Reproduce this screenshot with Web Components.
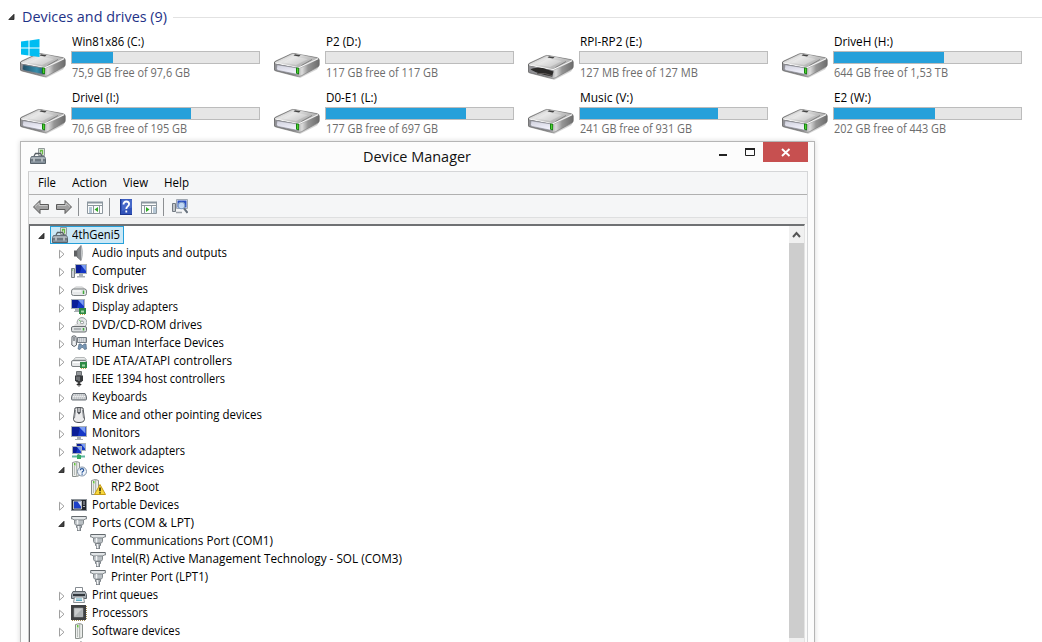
<!DOCTYPE html>
<html lang="en">
<head>
<meta charset="utf-8">
<title>Device Manager</title>
<style>
html,body{margin:0;height:642px;overflow:hidden;background:#fff;font:12px "Open Sans","Noto Sans",sans-serif;color:#000}
</style>
</head>
<body>
<desk-page></desk-page>
<script>
const define = (name, cls) => customElements.define(name, cls);

/* Text squeezed or stretched to a given width */
define('fit-text', class extends HTMLElement {
  connectedCallback() {
    if (this.shadowRoot) return;
    const r = this.attachShadow({mode:'open'});
    r.innerHTML = `<style>:host{display:block;white-space:nowrap;flex:none;width:${this.getAttribute('w')}px}span{display:inline-block;transform-origin:0 50%}</style><span><slot></slot></span>`;
    const s = r.querySelector('span');
    const w = s.getBoundingClientRect().width;
    if (w) s.style.transform = `scaleX(${+this.getAttribute('w') / w})`;
  }
});

const port = `<path d="M3.500 4.500h9v4l-1 1.500h-7l-1-1.500z" fill="#b9bfc3" stroke="#858b8f"/><path d="M.5 1.500h15v2.500h-1.500l-1 1h-10l-1-1H.5z" fill="#cfd4d7" stroke="#858b8f"/><path d="M1 1.500h14" stroke="#63696d"/><path d="M2 3h12" stroke="#f3f5f6"/><path d="M5.500 10.500h5v2h-1v3.500h-3v-3.500h-1z" fill="#a9afb3" stroke="#7b8186"/><path d="M6.500 5v4.500M7.500 11v4" stroke="#f2f4f5" stroke-width="1.500"/>`;
const tower = `<path d="M4.500 1.500l4-1 3 1v13l-3 1h-4z" fill="#eceeec" stroke="#8a908c"/><path d="M8.700 1v14" stroke="#a4aaa6"/><path d="M6.500 5v9" stroke="#b9bebb"/><rect x="6" y="2" width="1.500" height="2.500" fill="#68c53f"/>`;
const screen = (x,y,w,h) => `<rect x="${x+.5}" y="${y+.5}" width="${w-1}" height="${h-1}" fill="#1537c6" stroke="#a9b1b9"/><path d="M${x+1} ${y+1}h${w/2}l-2 ${h-2}h-${w/2-2}z" fill="#0b1f98"/><path d="M${x+w*.5} ${y+1}h${w*.4}v${h*.6}z" fill="#7b9df2"/>`;
const chip = (x,y) => `<path d="M${x} ${y}h7v6h-7z" fill="#2e8a45"/><path d="M${x+1} ${y+6.500}h5" stroke="#c4a544" stroke-dasharray="1 1"/><path d="M${x+2} ${y+3.500}h3" stroke="#a6d8a9" stroke-width="2"/>`;
const flatDrive = `<path d="M2.500 7l2-2.500h9l2 2.500z" fill="#e9ebeb" stroke="#b5b8b9"/><rect x=".5" y="7.500" width="15" height="6" rx="1.500" fill="#e6e8e9" stroke="#7c8183"/><path d="M2 9.500h9" stroke="#fff"/><path d="M12.500 9v3" stroke="#42a83b" stroke-width="1.500"/>`;
const ICONS = {
  manager: `<path d="M8.500.5h6v7h-6z" fill="#e4e7e5" stroke="#929a9a"/><path d="M10.500 4.500v-2h2v4" stroke="#67b944" fill="none" stroke-width="1.300"/><path d="M4 8l1.500-2.500h5L12 8" fill="none" stroke="#565e63" stroke-width="1.300"/><path d="M1.500 8.500h13l1 2v1.500H.500v-1.500z" fill="#a5aeb5" stroke="#66707a"/><path d="M.5 12h15v3.500H.500z" fill="#84909a" stroke="#59636b"/><path d="M4 10.500v3M12 10.500v3" stroke="#dce2e5" stroke-width="1.200"/>`,
  audio: `<path d="M3 5.500h3v6H3z" fill="#5c5f62"/><path d="M6 5l4-4.500v15L6 12z" fill="#85898c" stroke="#65696c" stroke-width=".7"/><path d="M10 .8c2 4 2 10 0 14.500z" fill="#d7dadb" stroke="#999c9e" stroke-width=".6"/>`,
  computer: `<path d="M.5 5.500h3v9h-3z" fill="#ced2d5" stroke="#7c8387"/><path d="M1 7h1" stroke="#55b94a"/>${screen(4,1,12,10)}<path d="M8 11h4v2h2v1.500H6V13h2z" fill="#a9b0b5"/>`,
  disk: `<path d="M2.500 8l2-2h7l2 2z" fill="#eff0f0" stroke="#c1c3c4"/><rect x=".5" y="8" width="15" height="6.500" rx="2" fill="#e6e8e9" stroke="#7c8183"/><path d="M2 10h8" stroke="#fff"/><path d="M12.500 9.500v3.500" stroke="#42a83b" stroke-width="1.500"/>`,
  display: `${screen(0,0,14,10)}<path d="M4 10h5v2h1v1H3v-1h1z" fill="#a9b0b5"/>${chip(8,9)}`,
  dvd: `<circle cx="11" cy="5.500" r="4.900" fill="#e4e8e8" stroke="#969c9e"/><circle cx="11" cy="5.500" r="1.500" fill="#fff" stroke="#8c9293"/><path d="M8 3l2 1.500" stroke="#71be65"/><path d="M2.500 9l2-2h7l2 2z" fill="#ddd"/><rect x=".5" y="9.500" width="15" height="5.500" rx="1.500" fill="#dcdfe0" stroke="#6b7073"/><path d="M3 12h7" stroke="#80868a"/><path d="M12.500 11v2.500" stroke="#42a83b" stroke-width="1.500"/>`,
  hid: `<path d="M1 1.500Q3 0 5 1.500l.5 8.500Q3 13 .8 10z" fill="#eceef0" stroke="#5c6268"/><path d="M3 2v4" stroke="#3b424a"/><path d="M6.500 2.500h9v5h-9z" fill="#bac0c6" stroke="#757c83"/><path d="M7 4h8M7 6h8" stroke="#f3f4f5" stroke-dasharray="1 1"/><path d="M7 14l1-5h2l1 1.500h1L13 9h2l.5 5-2 .5-1.500-2h-1.500L9 14.500z" fill="#7796b4" stroke="#566e86" stroke-width=".7"/>`,
  ide: `${flatDrive}${chip(9,9)}`,
  firewire: `<path d="M5.500.5h5v4h-5z" fill="#d9dcde" stroke="#6b7073"/><path d="M7 1v3M9 1v3" stroke="#4e5356"/><path d="M4 4.500h8v5l-2 2H6l-2-2z" fill="#383b3e"/><path d="M6 5.500v3.500M8 5.500v4.500" stroke="#a0a5a8"/><path d="M7.500 11h1v2h-1zM6 13h4v1H6zM7 15h2" fill="#222" stroke="#333" stroke-width=".7"/>`,
  keyboard: `<path d="M2 4.500h12l1.500 3v2.500q0 1-1 1h-13q-1 0-1-1V7.500z" fill="#b5b9bd" stroke="#6c7278"/><path d="M2.500 6h11M2 7.500h12M1.500 9h13" stroke="#f4f5f6" stroke-dasharray="1.500 .6"/>`,
  mouse: `<path d="M4 1Q8-.3 12 1l1.500 11.500Q13 15.500 8 15.500T2.500 12.500z" fill="#ececed" stroke="#4b4f53"/><path d="M6.300 1v4.500l1.700 2 1.700-2V1z" fill="#4a4e53"/><path d="M8 1v4" stroke="#fff" stroke-width="1.200"/><path d="M3.500 11L4.500 3M12.500 11L11.500 3" stroke="#85898d"/>`,
  monitor: `${screen(0,1,16,11)}<path d="M6 12h4v2h2v1H4v-1h2z" fill="#a9b0b5"/>`,
  network: `${screen(5,0,10,8)}${screen(1,3,10,8)}<path d="M7.500 11v3" stroke="#68a79b" stroke-width="2"/><path d="M1 13.500h13" stroke="#5fb6a0" stroke-width="2"/><path d="M6 12h4v4H6z" fill="#38ad62"/>`,
  other: `<g transform="translate(-3)">${tower}</g><circle cx="11" cy="10.500" r="4.500" fill="#edf3fa" stroke="#7f91a6"/><path d="M9.300 9.300q0-1.600 1.700-1.600t1.700 1.500q0 .8-1 1.400-.6.400-.6 1.200M11.100 12.600v1.200" stroke="#25539a" stroke-width="1.200"/>`,
  warning: `<g transform="translate(-3)">${tower}</g><path d="M10 5.500l5.500 10h-11z" fill="#f8d83c" stroke="#c79c16" stroke-linejoin="round"/><path d="M10 8.500v3.700M10 13.200v1.300" stroke="#332800" stroke-width="1.500"/>`,
  portable: `<rect x=".5" y="2.500" width="15" height="11" fill="#23272f" stroke="#8f959b"/><path d="M3 4.500h7v7H3z" fill="#1d3fc8"/><path d="M6.500 4.500h3.500v5z" fill="#dce6fb"/><path d="M2.500 4h8v8h-8z" stroke="#dfe4ea" stroke-width=".8"/><path d="M12 5h2M12 7h2M12 9.500h2" stroke="#b6bac1"/>`,
  port,
  printer: `<path d="M4.500.5h7v5h-7z" fill="#fff" stroke="#868c92"/><path d="M2 4.500h12l1.500 3v4H.500v-4z" fill="#a5acb2" stroke="#5c6369"/><path d="M2 8h12" stroke="#33383d" stroke-width="2"/><path d="M3.500 10h9l1 5.500h-11z" fill="#f4f7f8" stroke="#8b9196"/><path d="M5 12h6M5 13.500h6" stroke="#58a7bf"/>`,
  cpu: `<path d="M0 0h15v15H0z" fill="#3e4042"/><path d="M3 3h9v9H3z" fill="#c9cccd" stroke="#8b8e90" stroke-width=".6"/><path d="M3.500 11.500l8-8v8z" fill="#aeb2b4"/><path d="M1 15.500h14M15.500 1v14" stroke="#a48c50" stroke-dasharray="1 1"/>`,
  software: tower,
  back: `<path d="M.5 8L7 1.500v4h8.500v5H7v4z" fill="#a0a0a0" stroke="#5a5a5a"/><path d="M2 7.500l4-3.500v2.500h8.500" fill="none" stroke="#c9c9c9"/>`,
  forward: `<path d="M15.500 8L9 1.500v4H.500v5H9v4z" fill="#a0a0a0" stroke="#5a5a5a"/><path d="M14 7.500L10 4v2.500H1.500" fill="none" stroke="#c9c9c9"/>`,
  tree: `<path d="M.5 3.500h15v11H.500z" fill="#fbfcfc" stroke="#8d979e"/><path d="M0 3.500h16" stroke="#8b969f" stroke-width="2"/><path d="M1 6.500h14M6.500 7v8M12.500 7v8" stroke="#8d979e"/><path d="M2 9h3M2 11h3M2 13h3" stroke="#6e91ad"/><path d="M11 8v5L7.500 10.500z" fill="#30aa25"/>`,
  pane: `<path d="M.5 3.500h15v11H.500z" fill="#fbfcfc" stroke="#8d979e"/><path d="M0 3.500h16" stroke="#8b969f" stroke-width="2"/><path d="M1 6.500h14M10.500 7v8M3.500 7v8" stroke="#8d979e"/><path d="M12 9h3M12 11h3M12 13h3" stroke="#6e91ad"/><path d="M5 8v5l3.500-2.500z" fill="#30aa25"/>`,
  help: `<path d="M2 0h12v16H2z" fill="#3153b9"/><path d="M2.500 0v16M2 15.500h12" stroke="#1d3792"/><path d="M4 .500h10v8L4 12z" fill="#5577d4" opacity=".6"/><path d="M5.500 5.500q0-3 2.800-3t2.800 2.600q0 1.500-1.600 2.500-1.200.9-1.200 2.400M8.300 11.500v2" stroke="#fff" stroke-width="1.800"/>`,
  scan: `<path d="M.5 4.500h3v8h-3z" fill="#c2c6ca" stroke="#737a82"/><path d="M4.500.5h11v9h-11z" fill="#e9edf1" stroke="#a1a9b2"/><path d="M5.500 1.500h9v7h-9z" fill="#2a4fc0"/><path d="M4 13.500h6" stroke="#9ca2a8" stroke-width="1.500"/><circle cx="9.500" cy="6.500" r="3.300" fill="#cfe5fb" fill-opacity=".9" stroke="#7f9cc4" stroke-width="1.100"/><path d="M12 9.300l3.500 4.500" stroke="#65707c" stroke-width="2"/>`
};
define('sys-icon', class extends HTMLElement {
  connectedCallback() {
    if (this.shadowRoot) return;
    this.attachShadow({mode:'open'}).innerHTML = `<style>:host{display:block;width:16px;height:16px;flex:none}svg{display:block;width:100%;height:100%}</style><svg viewBox="0 0 16 16" fill="none">${ICONS[this.getAttribute('name')]}</svg>`;
  }
});

/* Triangle in front of a tree node */
define('tree-arrow', class extends HTMLElement {
  connectedCallback() {
    if (this.shadowRoot) return;
    const open = this.hasAttribute('open');
    this.attachShadow({mode:'open'}).innerHTML = `<style>:host{display:block;width:8px;height:10px;flex:none}svg{display:block}</style><svg width="8" height="10">${open ? '<path d="M6 2.300v5.200H.8z" fill="#444" stroke="#1c1c1c" stroke-width=".8"/>' : '<path d="M1.500 1.200v8L6 5.200z" fill="#fff" stroke="#a0a0a0"/>'}</svg>`;
  }
});

define('drive-icon', class extends HTMLElement {
  connectedCallback() {
    if (this.shadowRoot) return;
    const kind = this.getAttribute('kind');
    const dy = kind === 'empty' ? 2 : 0;
    const face = kind === 'empty' ? '<path d="M2.500 31.500q3-2.500 12-1.500l11 3.500-1.500 5q-13-2-21.500-7z" fill="#2c2b2a"/><path d="M9 35.500q8-1 15 2.200" stroke="#5f5a57" fill="none"/>'
      : `<path d="M3 28.700l20.500 3.300q1 0 1 1v4.200q0 1.500-2 1L4 34.500q-1.500-.5-1.500-2z" fill="${kind==='system' ? 'url(#t)' : 'url(#w)'}" stroke="#7f828a" stroke-width=".6"/>`;
    this.attachShadow({mode:'open'}).innerHTML = `<style>:host{display:block;width:48px;height:44px}svg{display:block}</style>
    <svg width="48" height="44"><defs>
    <linearGradient id="a" x2="1" y2=".7"><stop stop-color="#8a8a8a"/><stop offset=".35" stop-color="#e6e6e6"/><stop offset=".65" stop-color="#c2c2c2"/><stop offset="1" stop-color="#a0a0a0"/></linearGradient>
    <linearGradient id="b" x2="1"><stop stop-color="#5f5f5f"/><stop offset=".45" stop-color="#8a8a8a"/><stop offset=".62" stop-color="#dcdcdc"/><stop offset=".75" stop-color="#969696"/><stop offset="1" stop-color="#6c6c6c"/></linearGradient>
    <linearGradient id="w" y2="1" x2=".3"><stop stop-color="#cfd0dc"/><stop offset="1" stop-color="#f2f2fc"/></linearGradient>
    <linearGradient id="t" x2="1"><stop stop-color="#224d65"/><stop offset=".65" stop-color="#378eac"/><stop offset="1" stop-color="#23556d"/></linearGradient></defs>
    <g transform="translate(0 ${dy})"><path d="M1 35l23 6.500 21-11-2 3-17 8.500z" fill="#aaa" opacity=".5"/>
    <path d="M-.2 28q0-2 2-3l15-7q1.500-.9 4-.4l22 4q2.500.5 2.500 2.500v4.500q0 1.500-1.500 2.500L27 40q-2 1-4.500.3L2 35Q0 34.500 0 33z" fill="url(#b)" stroke="#6a6a6a" stroke-width=".6"/>
    <path d="M1 27q0-1 1.500-1.700l15-7q1.500-.7 3.500-.3l22 4q2.500.6 1 1.500L28 31.500q-1.500.8-4 .3z" fill="url(#a)"/>
    <path d="M9 26.500l11-6 14 2.500-12 6z" fill="#fff" opacity=".3"/><path d="M21 18.300l5.500 1-1.500 1.200-5.500-1z" fill="#444"/>
    <path d="M38 23.500L27.500 29.500" stroke="#777" stroke-width=".8"/>
    <path d="M1 27l24 4.700 19-9" stroke="#fff" stroke-width=".9" fill="none"/>
    <path d="M.7 27.700l24.800 4.500-.7 7.300L2 34.500Q.500 34 .5 32z" fill="#909094"/>${face}
    ${kind === 'empty' ? '' : '<path d="M22 31.500l3 .3v6.400l-3-.6z" fill="#148410"/><path d="M23.700 32.500v4.500" stroke="#5fe03a"/>'}</g>
    ${kind === 'system' ? '<path d="M1 5.600l7.500-1v7H1zM9.500 4.500L19.500 3v8.600h-10zM1 12.600h7.500v7l-7.500-1zM9.500 12.600h10V21l-10-1.300z" fill="#00bdf2"/>' : ''}</svg>`;
  }
});

define('drive-tile', class extends HTMLElement {
  connectedCallback() {
    if (this.shadowRoot) return;
    const [name, w, free, fw, fill, kind] = ['name','w','free','fw','fill','kind'].map(k => this.getAttribute(k));
    this.attachShadow({mode:'open'}).innerHTML = `<style>
    :host{display:flex;height:56px}
    .info{margin-left:4px;flex:none;width:188px}
    fit-text{line-height:11px;height:15px}
    .bar{height:11px;width:187px;margin-left:-1px;border:1px solid #bcbcbc;background:#e6e6e6}
    .bar i{display:block;height:11px;background:#26a0da;width:${fill}px}
    .free{color:#6d6d6d;line-height:15px;margin-top:1px}</style>
    <drive-icon kind="${kind}"></drive-icon>
    <div class="info"><fit-text w="${w}">${name}</fit-text><div class="bar"><i></i></div><fit-text class="free" w="${fw}">${free}</fit-text></div>`;
  }
});

define('drive-group', class extends HTMLElement {
  connectedCallback() {
    if (this.shadowRoot) return;
    const tiles = [
      ['Win81x86 (C:)',72,'75,9 GB free of 97,6 GB',118,41,'system'],
      ['P2 (D:)',35,'117 GB free of 117 GB',112,0,'disk'],
      ['RPI-RP2 (E:)',62,'127 MB free of 127 MB',118,0,'empty'],
      ['DriveH (H:)',59,'644 GB free of 1,53 TB',114,110,'disk'],
      ['DriveI (I:)',47,'70,6 GB free of 195 GB',115,119,'disk'],
      ['D0-E1 (L:)',51,'177 GB free of 697 GB',112,140,'disk'],
      ['Music (V:)',53,'241 GB free of 931 GB',112,138,'disk'],
      ['E2 (W:)',37,'202 GB free of 443 GB',112,101,'disk']];
    this.attachShadow({mode:'open'}).innerHTML = `<style>
    :host{display:block;height:141px;overflow:hidden}
    header{display:flex;align-items:center;height:34px;padding-left:8px}
    tree-arrow{margin-right:6px}
    header fit-text{font-size:14.500px;color:#1e3287;line-height:34px}
    hr{flex:1;border:0;height:1px;background:#e2e2e2;margin:1px 0 0 6px}
    .grid{display:grid;grid-template-columns:repeat(4,254px);grid-auto-rows:56px;padding:2px 0 0 20px}</style>
    <header><tree-arrow open></tree-arrow><fit-text w="145">Devices and drives (9)</fit-text><hr></header>
    <div class="grid">${tiles.map(t => `<drive-tile name="${t[0]}" w="${t[1]}" free="${t[2]}" fw="${t[3]}" fill="${t[4]}" kind="${t[5]}"></drive-tile>`).join('')}</div>`;
  }
});

define('title-bar', class extends HTMLElement {
  connectedCallback() {
    if (this.shadowRoot) return;
    this.attachShadow({mode:'open'}).innerHTML = `<style>
    :host{display:flex;height:29px;padding-left:9px}
    sys-icon{margin-top:6px}
    .t{margin:4px 0 0 317px;font-size:14.500px;line-height:22px;color:#111}
    svg{display:block;margin-left:auto;margin-right:6px}</style>
    <sys-icon name="manager"></sys-icon><fit-text class="t" w="108">Device Manager</fit-text>
    <svg width="92" height="20"><path d="M3 13h8" stroke="#222" stroke-width="2"/><path d="M29.500 7.500h9v6h-9z" fill="none" stroke="#222"/><path d="M29 7h10" stroke="#222" stroke-width="2"/><rect x="47" width="45" height="20" fill="#c75050"/><path d="M66 7l7.500 7M73.500 7L66 14" stroke="#fff" stroke-width="1.900"/></svg>`;
  }
});

define('menu-bar', class extends HTMLElement {
  connectedCallback() {
    if (this.shadowRoot) return;
    this.attachShadow({mode:'open'}).innerHTML = `<style>
    :host{display:flex;align-items:center;height:22px;gap:16px;padding-left:9px;background:#f5f6f7;border-bottom:1px solid #b0b0b0}
    fit-text{line-height:22px;height:22px}</style>
    <fit-text w="18">File</fit-text><fit-text w="35">Action</fit-text><fit-text w="25">View</fit-text><fit-text w="25">Help</fit-text>`;
  }
});

define('tool-bar', class extends HTMLElement {
  connectedCallback() {
    if (this.shadowRoot) return;
    this.attachShadow({mode:'open'}).innerHTML = `<style>
    :host{display:flex;align-items:center;height:22px;padding:1px 0 0 4px;box-sizing:border-box;background:#f5f6f7}
    i{width:1px;height:18px;background:#8c8f92;margin:0 8px 0 6px}
    .g{margin-left:7px}</style>
    <sys-icon name="back"></sys-icon><sys-icon class="g" name="forward"></sys-icon><i></i>
    <sys-icon name="tree"></sys-icon><i></i><sys-icon name="help"></sys-icon><sys-icon class="g" name="pane"></sys-icon><i></i><sys-icon name="scan"></sys-icon>`;
  }
});

define('tree-node', class extends HTMLElement {
  connectedCallback() {
    if (this.shadowRoot) return;
    const level = +this.getAttribute('level'), state = this.getAttribute('state');
    const arrow = state === 'leaf' ? '' : `<tree-arrow ${state === 'open' ? 'open' : ''}></tree-arrow>`;
    this.attachShadow({mode:'open'}).innerHTML = `<style>
    :host{display:flex;height:18px;line-height:18px;align-items:center;box-sizing:border-box;padding-left:${[8,28,60][level]}px}
    tree-arrow{margin-top:2px;margin-right:${level ? 5 : 4}px}
    .item{display:flex;align-items:center;height:18px}
    .item fit-text{margin-left:5px}
    .root{box-sizing:border-box;border:1px solid #26a0da;background:#cbe8f6;padding:0 3px 0 1px}
    .root fit-text{margin-left:4px;line-height:16px}</style>
    ${arrow}<div class="item ${level ? '' : 'root'}"><sys-icon name="${this.getAttribute('icon')}"></sys-icon><fit-text w="${this.getAttribute('w')}">${this.getAttribute('label')}</fit-text></div>`;
  }
});

define('scroll-bar', class extends HTMLElement {
  connectedCallback() {
    if (this.shadowRoot) return;
    this.attachShadow({mode:'open'}).innerHTML = `<style>:host{display:flex;flex-direction:column;width:15px;background:#f0f0f0}svg{display:block}.thumb{height:395px;background:#cdcdcd}</style>
    <svg width="15" height="17"><path d="M4 11l3.500-4 3.500 4" fill="none" stroke="#555" stroke-width="2"/></svg><div class="thumb"></div>`;
  }
});

define('device-tree', class extends HTMLElement {
  connectedCallback() {
    if (this.shadowRoot) return;
    const rows = [
      [0,'open','manager','4thGeni5',48],
      [1,'shut','audio','Audio inputs and outputs',135],[1,'shut','computer','Computer',54],[1,'shut','disk','Disk drives',56],
      [1,'shut','display','Display adapters',86],[1,'shut','dvd','DVD/CD-ROM drives',110],[1,'shut','hid','Human Interface Devices',132],
      [1,'shut','ide','IDE ATA/ATAPI controllers',140],[1,'shut','firewire','IEEE 1394 host controllers',133],[1,'shut','keyboard','Keyboards',55],
      [1,'shut','mouse','Mice and other pointing devices',170],[1,'shut','monitor','Monitors',48],[1,'shut','network','Network adapters',93],
      [1,'open','other','Other devices',72],[2,'leaf','warning','RP2 Boot',48],[1,'shut','portable','Portable Devices',87],
      [1,'open','port','Ports (COM &amp; LPT)',102],[2,'leaf','port','Communications Port (COM1)',162],
      [2,'leaf','port','Intel(R) Active Management Technology - SOL (COM3)',291],[2,'leaf','port','Printer Port (LPT1)',97],
      [1,'shut','printer','Print queues',66],[1,'shut','cpu','Processors',56],[1,'shut','software','Software devices',88]];
    this.attachShadow({mode:'open'}).innerHTML = `<style>
    :host{display:flex;height:416px;width:774px;background:#fff;border-top:2px solid #6f7173;border-left:1px solid #68696b;border-right:1px solid #e3e3e3;overflow:hidden}
    .rows{flex:1;min-width:0}
    .next{margin:1px 0 0 41px}</style>
    <div class="rows">${rows.map(r => `<tree-node level="${r[0]}" state="${r[1]}" icon="${r[2]}" label="${r[3]}" w="${r[4]}"></tree-node>`).join('')}<sys-icon class="next" name="audio"></sys-icon></div><scroll-bar></scroll-bar>`;
  }
});

define('app-window', class extends HTMLElement {
  connectedCallback() {
    if (this.shadowRoot) return;
    this.attachShadow({mode:'open'}).innerHTML = `<style>
    :host{display:block;box-sizing:border-box;width:795px;height:520px;margin-left:20px;border:1px solid #b5b5b5;background:#fcfcfc;box-shadow:0 0 5px rgba(0,0,0,.16)}
    .client{margin:0 6px 0 7px;border:1px solid #d5d6d8;border-left-color:#ccc;background:#fafafa}</style>
    <title-bar></title-bar><div class="client"><slot></slot></div>`;
  }
});

define('desk-page', class extends HTMLElement {
  connectedCallback() {
    if (this.shadowRoot) return;
    this.attachShadow({mode:'open'}).innerHTML = `<style>:host{display:block;width:1042px;height:642px;overflow:hidden}
    .band{height:6px;border-top:1px solid #dedfe0;background:#f0f0f0}</style>
    <drive-group></drive-group>
    <app-window><menu-bar></menu-bar><tool-bar></tool-bar><div class="band"></div><device-tree></device-tree></app-window>`;
  }
});
</script>
</body>
</html>
